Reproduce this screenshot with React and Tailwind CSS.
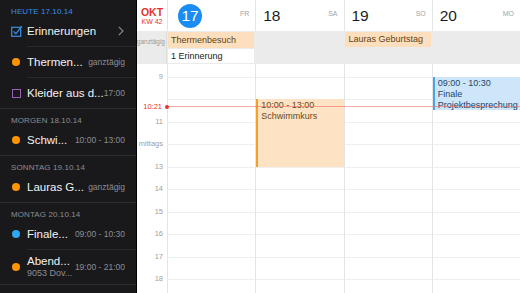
import React from "react";

const HOUR = 22.5;
const TOP = 12.5;

const sections = [
  {
    label: "HEUTE 17.10.14",
    today: true,
    rows: [
      { icon: "check", title: "Erinnerungen", chevron: true },
      { icon: "dot", color: "#ff9500", title: "Thermen...", right: "ganztägig" },
      { icon: "square", title: "Kleider aus d...", right: "17:00" },
    ],
  },
  {
    label: "MORGEN 18.10.14",
    rows: [{ icon: "dot", color: "#ff9500", title: "Schwi...", right: "10:00 - 13:00" }],
  },
  {
    label: "SONNTAG 19.10.14",
    rows: [{ icon: "dot", color: "#ff9500", title: "Lauras G...", right: "ganztägig" }],
  },
  {
    label: "MONTAG 20.10.14",
    rows: [
      { icon: "dot", color: "#2ea6f0", title: "Finale...", right: "09:00 - 10:30" },
      { icon: "dot", color: "#ff9500", title: "Abend...", sub: "9053 Dov...", right: "19:00 - 21:00" },
    ],
  },
  { label: "DIENSTAG 21.10.14", rows: [] },
];

const days = [
  { num: "17", name: "FR", today: true },
  { num: "18", name: "SA" },
  { num: "19", name: "SO" },
  { num: "20", name: "MO" },
];

const hours = ["9", "", "11", "mittags", "13", "14", "15", "16", "17", "18"];

const events = [
  {
    col: 1,
    start: 10,
    end: 13,
    time: "10:00 - 13:00",
    title: "Schwimmkurs",
    box: "bg-[#fde3c4] border-[#f5a128] text-[#6b4818]",
  },
  {
    col: 3,
    start: 9,
    end: 10.5,
    time: "09:00 - 10:30",
    title: "Finale Projektbesprechung",
    box: "bg-[#cde6fa] border-[#45a5ee] text-[#1f4466]",
  },
];

function RowIcon({ row }) {
  if (row.icon === "check") {
    return (
      <svg width="12" height="12" viewBox="0 0 12 12" className="shrink-0">
        <rect x="0.7" y="2.3" width="9" height="9" fill="none" stroke="#3a8fe6" strokeWidth="1.2" />
        <path d="M2.6 6.4 L4.9 8.8 L10.8 1.2" fill="none" stroke="#3a8fe6" strokeWidth="1.3" />
      </svg>
    );
  }
  if (row.icon === "square") {
    return <div className="w-[9px] h-[9px] border border-[#9a62b5] shrink-0 ml-[1px] mr-[2px]" />;
  }
  return <div className="w-[8px] h-[8px] rounded-full shrink-0 ml-[1px] mr-[3px]" style={{ background: row.color }} />;
}

function Sidebar() {
  return (
    <div className="w-[137px] shrink-0 h-full bg-[#19191b] border-r border-black overflow-hidden">
      {sections.map((s, i) => (
        <div key={s.label} className={i > 0 ? "border-t border-[#2e2e30]" : ""}>
          <div
            className={`h-[16px] pt-[8px] pl-[11px] text-[8px] leading-[8px] font-medium tracking-[0.1px] ${
              s.today ? "text-[#3a8fe6]" : "text-[#8d8d92]"
            }`}
          >
            {s.label}
          </div>
          {s.rows.map((r, j) => (
            <div key={r.title} className={j > 0 ? "border-t border-[#2a2a2c] ml-[27px]" : "ml-[27px]"}>
              <div className={`-ml-[16px] flex items-center pr-[11px] ${r.sub ? "h-[34px]" : "h-[30px]"}`}>
                <RowIcon row={r} />
                <div className="ml-[4px] flex-1 min-w-0">
                  <div className="text-[11.5px] leading-[13px] text-[#f2f2f2] whitespace-nowrap">{r.title}</div>
                  {r.sub && (
                    <div className="text-[9px] leading-[11px] text-[#8d8d92] whitespace-nowrap">{r.sub}</div>
                  )}
                </div>
                {r.right && (
                  <div className="text-[8.5px] text-[#8d8d92] whitespace-nowrap">{r.right}</div>
                )}
                {r.chevron && (
                  <svg width="6" height="10" viewBox="0 0 6 10" className="mr-[1px]">
                    <path d="M0.8 0.8 L5 5 L0.8 9.2" fill="none" stroke="#8d8d92" strokeWidth="1.1" />
                  </svg>
                )}
              </div>
            </div>
          ))}
        </div>
      ))}
    </div>
  );
}

function Calendar() {
  const cols = "grid grid-cols-[30px_repeat(4,1fr)]";
  return (
    <div className="flex-1 h-full flex flex-col bg-white overflow-hidden">
      <div className={`${cols} h-[31px] shrink-0`}>
        <div className="flex flex-col items-center justify-center text-[#e3332a] pt-[1px]">
          <div className="text-[10.5px] leading-[10px] font-bold">OKT</div>
          <div className="text-[7px] leading-[8px] mt-[1px]">KW 42</div>
        </div>
        {days.map((d) => (
          <div key={d.num} className="border-l border-[#e4e4e4] flex items-center justify-between pr-[6px]">
            {d.today ? (
              <div className="ml-[10px] w-[24px] h-[24px] rounded-full bg-[#1b8df2] text-white text-[15.5px] flex items-center justify-center">
                {d.num}
              </div>
            ) : (
              <div className="ml-[7px] text-[15.5px] text-[#1c1c1e] mt-[1px]">{d.num}</div>
            )}
            <div className="text-[7px] text-[#a3a3a3] mb-[3px]">{d.name}</div>
          </div>
        ))}
      </div>

      <div className={`${cols} h-[33px] shrink-0 bg-[#ebebeb]`}>
        <div className="border-r border-[#dedede] flex items-start justify-end pt-[6px] pr-[1px] overflow-hidden">
          <span className="text-[6.5px] text-[#9a9a9a] whitespace-nowrap">ganztägig</span>
        </div>
        <div className="flex flex-col gap-[1px] pt-[1px] pl-[1px] pr-[1px]">
          <div className="h-[16px] bg-[#fddfbd] px-[3px] text-[9px] leading-[16px] text-[#5e3f14] whitespace-nowrap">
            Thermenbesuch
          </div>
          <div className="h-[14px] bg-white px-[3px] text-[9px] leading-[14px] text-[#222] whitespace-nowrap">
            1 Erinnerung
          </div>
        </div>
        <div />
        <div className="pt-[1px] pl-[1px] pr-[1px]">
          <div className="h-[15px] bg-[#fddfbd] px-[4px] text-[9px] leading-[15px] text-[#5e3f14] whitespace-nowrap overflow-hidden">
            Lauras Geburtstag
          </div>
        </div>
        <div />
      </div>

      <div className="relative flex-1 overflow-hidden">
        <div className={`${cols} h-[12.5px]`}>
          <div />
          {days.map((d) => (
            <div key={d.num} className="border-l border-[#e4e4e4]" />
          ))}
        </div>
        {hours.map((h, i) => (
          <div key={i} className={`${cols} h-[22.5px]`}>
            <div className="relative">
              <span className="absolute right-[4px] -top-[5px] text-[7.5px] leading-[9px] text-[#a0a0a0]">{h}</span>
            </div>
            {days.map((d) => (
              <div key={d.num} className="border-l border-t border-[#e4e4e4] border-t-[#efefef]" />
            ))}
          </div>
        ))}

        <div className={`${cols} absolute inset-0 pointer-events-none`}>
          <div />
          {days.map((d, ci) => (
            <div key={d.num} className="relative">
              {events
                .filter((e) => e.col === ci)
                .map((e) => (
                  <div
                    key={e.title}
                    className={`absolute left-[1px] right-0 border-l-2 pl-[3px] pt-[1px] text-[9px] leading-[11px] overflow-hidden ${e.box}`}
                    style={{ top: TOP + (e.start - 9) * HOUR, height: (e.end - e.start) * HOUR }}
                  >
                    <div>{e.time}</div>
                    <div>{e.title}</div>
                  </div>
                ))}
            </div>
          ))}
        </div>

        <div
          className="absolute left-0 right-0 flex items-center h-[9px] -mt-[4.5px]"
          style={{ top: TOP + (10 + 21 / 60 - 9) * HOUR }}
        >
          <div className="w-[30px] text-right pr-[5px] text-[7.5px] leading-[9px] text-[#e3332a]">10:21</div>
          <div className="w-[4px] h-[4px] rounded-full bg-[#e3332a] -ml-[2px]" />
          <div className="flex-1 h-[1px] bg-[#ef6e66]/60" />
        </div>
      </div>
    </div>
  );
}

export default function App() {
  return (
    <div className="w-[520px] h-[293px] flex overflow-hidden font-['Liberation_Sans',Arial,sans-serif]">
      <Sidebar />
      <Calendar />
    </div>
  );
}
